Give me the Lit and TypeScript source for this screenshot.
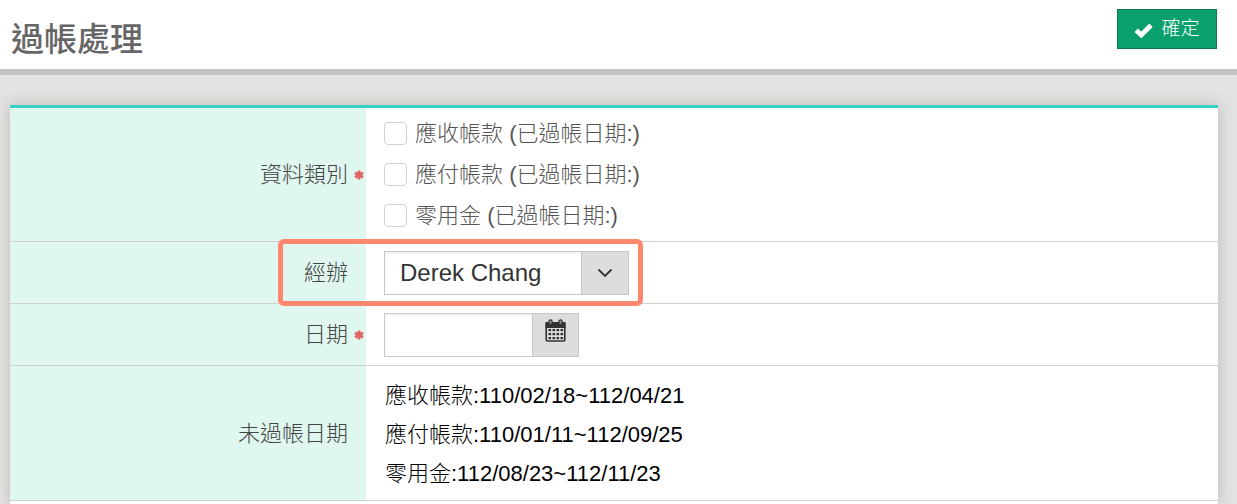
import { LitElement, html, css, svg, nothing } from "lit";
import { customElement, property } from "lit/decorators.js";

@customElement("form-row")
class FormRow extends LitElement {
  @property() label = "";
  @property({ type: Boolean }) required = false;
  @property({ type: Boolean }) highlighted = false;

  static styles = css`
    :host {
      display: flex;
      border-bottom: 1px solid #d0d0d0;
    }
    .label {
      display: flex;
      align-items: center;
      justify-content: flex-end;
      flex: 0 0 356px;
      box-sizing: border-box;
      background: #e0f7ef;
      color: #444;
      font-weight: 300;
    }
    .mark {
      display: flex;
      justify-content: center;
      width: 18px;
      padding-left: 4px;
      box-sizing: border-box;
    }
    .field {
      position: relative;
      flex: 1;
      min-width: 0;
      padding: 0 18px;
    }
    .highlight {
      position: absolute;
      top: -3px;
      bottom: -3px;
      left: -88px;
      width: 365px;
      box-sizing: border-box;
      border: 5px solid #ff876e;
      border-radius: 6px;
      pointer-events: none;
      z-index: 1;
    }
  `;

  render() {
    return html`
      <div class="label">
        <span>${this.label}</span>
        <span class="mark">
          ${this.required
            ? html`<svg width="10" height="10" viewBox="0 0 10 10" aria-label="必填">
                <path d="M5 .5v9M1 2.8l8 4.4M9 2.8l-8 4.4" stroke="#e06464" stroke-width="2.8" fill="none" />
              </svg>`
            : nothing}
        </span>
      </div>
      <div class="field">
        <slot></slot>
        ${this.highlighted ? html`<div class="highlight"></div>` : nothing}
      </div>
    `;
  }
}

@customElement("app-root")
class AppRoot extends LitElement {
  static styles = css`
    :host {
      display: flex;
      flex-direction: column;
      min-height: 100vh;
      background: #e4e3e1;
      font-family: "Liberation Sans", "Noto Sans CJK TC", sans-serif;
      font-size: 22px;
      line-height: 41px;
      color: #555;
    }
    .header {
      display: flex;
      align-items: flex-start;
      justify-content: space-between;
      padding: 9px 20px 9px 11px;
      background: #fff;
      border-bottom: 6px solid #c3c3c3;
    }
    .title {
      margin: 11px 0 0;
      font-size: 33px;
      line-height: 40px;
      font-weight: 500;
      color: #666;
    }
    .confirm {
      display: flex;
      align-items: center;
      justify-content: center;
      gap: 8px;
      width: 100px;
      height: 40px;
      padding: 0;
      border: 1px solid #0a7a53;
      background: #0aa06e;
      color: #fff;
      font-family: inherit;
      font-size: 19px;
      font-weight: 300;
      line-height: 24px;
    }
    .panel {
      flex: 1;
      margin: 30px 19px 0 10px;
      border-top: 3px solid #35d2c2;
      background: #fff;
      box-shadow: 0 0 14px rgba(100, 80, 80, 0.3);
    }
    .options {
      display: flex;
      flex-direction: column;
      padding: 5px 0;
    }
    .option {
      display: flex;
      align-items: center;
      gap: 8px;
      height: 41px;
      font-weight: 300;
    }
    .box {
      appearance: none;
      width: 23px;
      height: 23px;
      margin: 0;
      border: 1px solid #d2d2d2;
      border-radius: 4px;
      background: #fff;
    }
    .box:checked {
      background: #0aa06e;
    }
    .control {
      display: flex;
      position: relative;
      height: 44px;
      margin: 9px 0 8px;
    }
    .select {
      appearance: none;
      width: 245px;
      padding: 0 48px 2px 15px;
      border: 1px solid #c8c8c8;
      border-radius: 0;
      background: #fff;
      box-shadow: inset 0 2px 2px #f3f3f3;
      font-family: inherit;
      font-size: 24px;
      color: #333;
    }
    .arrow {
      display: flex;
      align-items: center;
      justify-content: center;
      position: absolute;
      left: 197px;
      width: 48px;
      height: 44px;
      box-sizing: border-box;
      border: 1px solid #c8c8c8;
      background: #ddd;
      pointer-events: none;
    }
    .date {
      width: 148px;
      box-sizing: border-box;
      padding: 0 8px;
      border: 1px solid #c8c8c8;
      border-right: 0;
      background: #fff;
      box-shadow: inset 0 2px 2px #f3f3f3;
      font-family: inherit;
      font-size: 22px;
    }
    .pick {
      display: flex;
      align-items: flex-start;
      justify-content: center;
      width: 47px;
      padding: 5px 0;
      border: 1px solid #c8c8c8;
      background: #ddd;
    }
    .ranges {
      margin: 0;
      padding: 10px 1px 7px;
      list-style: none;
      line-height: 39px;
      font-weight: 300;
      color: #000;
    }
  `;

  private categories = ["應收帳款", "應付帳款", "零用金"];
  private ranges = [
    "應收帳款:110/02/18~112/04/21",
    "應付帳款:110/01/11~112/09/25",
    "零用金:112/08/23~112/11/23",
  ];

  private calendar() {
    const dots = [0, 1, 2].flatMap((r) =>
      [0, 1, 2, 3].map(
        (c) => svg`<rect x=${3.5 + c * 4} y=${10 + r * 4} width="2.6" height="2.2" fill="#333" />`
      )
    );
    return html`<svg width="21" height="23" viewBox="0 0 21 23" aria-hidden="true">
      <path d="M.5 3h20v6H.5z" fill="#333" />
      <rect x="1.2" y="4" width="18.6" height="18" rx="1" fill="none" stroke="#333" stroke-width="1.6" />
      <rect x="3.9" y="0.9" width="3.2" height="4.6" rx="1.6" fill="#999" stroke="#333" stroke-width="1.3" />
      <rect x="13.9" y="0.9" width="3.2" height="4.6" rx="1.6" fill="#999" stroke="#333" stroke-width="1.3" />
      ${dots}
    </svg>`;
  }

  render() {
    return html`
      <header class="header">
        <h1 class="title">過帳處理</h1>
        <button class="confirm" type="button">
          <svg width="19" height="17" viewBox="0 0 19 17" aria-hidden="true">
            <path d="M2.2 9.2 7.3 14 17 4.2" fill="none" stroke="#fff" stroke-width="4.8" />
          </svg>
          <span>確定</span>
        </button>
      </header>
      <main class="panel">
        <form-row label="資料類別" required>
          <div class="options">
            ${this.categories.map(
              (name) => html`<label class="option">
                <input class="box" type="checkbox" />
                <span>${name} (已過帳日期:)</span>
              </label>`
            )}
          </div>
        </form-row>
        <form-row label="經辦" highlighted>
          <div class="control">
            <select class="select" aria-label="經辦">
              <option>Derek Chang</option>
            </select>
            <span class="arrow">
              <svg width="16" height="10" viewBox="0 0 16 10" aria-hidden="true">
                <path d="M1.5 1.5 8 8l6.5-6.5" fill="none" stroke="#333" stroke-width="1.8" />
              </svg>
            </span>
          </div>
        </form-row>
        <form-row label="日期" required>
          <div class="control">
            <input class="date" type="text" aria-label="日期" />
            <button class="pick" type="button" aria-label="選擇日期">${this.calendar()}</button>
          </div>
        </form-row>
        <form-row label="未過帳日期">
          <ul class="ranges">
            ${this.ranges.map((range) => html`<li>${range}</li>`)}
          </ul>
        </form-row>
      </main>
    `;
  }
}
